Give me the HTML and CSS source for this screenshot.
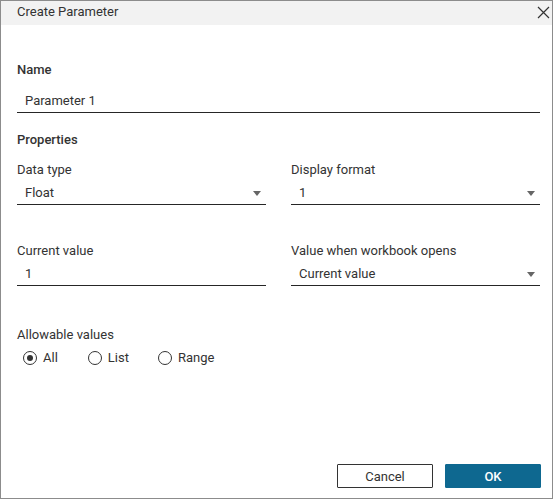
FILE: index.html
```html
<!DOCTYPE html>
<html>
<head>
<meta charset="utf-8">
<link rel="stylesheet" href="styles.css">
</head>
<body>
<div class="dialog">
  <div class="titlebar">
    <span class="title">Create Parameter</span>
    <svg class="close" width="13" height="13" viewBox="0 0 13 13"><path d="M1 1 L12 12 M12 1 L1 12" stroke="#333" stroke-width="1.2" fill="none"/></svg>
  </div>
  <div class="content">
    <div class="label strong name-label">Name</div>
    <div class="field name-field">Parameter 1</div>
    <div class="label strong props">Properties</div>
    <div class="grid">
      <div class="cell">
        <div class="label">Data type</div>
        <div class="field select"><span>Float</span><span class="arrow"></span></div>
      </div>
      <div class="cell">
        <div class="label">Display format</div>
        <div class="field select"><span>1</span><span class="arrow"></span></div>
      </div>
      <div class="cell row2">
        <div class="label">Current value</div>
        <div class="field"><span>1</span></div>
      </div>
      <div class="cell row2">
        <div class="label">Value when workbook opens</div>
        <div class="field select"><span>Current value</span><span class="arrow"></span></div>
      </div>
    </div>
    <div class="label allow">Allowable values</div>
    <div class="radios">
      <label class="radio"><span class="circle checked"></span>All</label>
      <label class="radio"><span class="circle"></span>List</label>
      <label class="radio"><span class="circle"></span>Range</label>
    </div>
    <div class="buttons">
      <button class="btn cancel">Cancel</button>
      <button class="btn ok">OK</button>
    </div>
  </div>
</div>
</body>
</html>
```
FILE: styles.css
```css
html, body {
  margin: 0;
  padding: 0;
  background: #fff;
}
body {
  font-family: Roboto, "Liberation Sans", sans-serif;
  font-size: 13px;
  color: #333;
}
.dialog {
  width: 553px;
  height: 499px;
  box-sizing: border-box;
  border: 1px solid #8c8c8c;
  display: flex;
  flex-direction: column;
}
.titlebar {
  height: 24px;
  background: #f2f2f2;
  display: flex;
  align-items: center;
  justify-content: space-between;
  padding: 0 2px 0 16px;
}
.title {
  line-height: 21px;
  margin-top: -4px;
  color: #333;
}
.close {
  margin-top: -2px;
}
.content {
  flex: 1;
  display: flex;
  flex-direction: column;
  padding: 0 12px 10px 16px;
}
.label {
  line-height: 16px;
  height: 16px;
}
.strong {
  font-weight: 500;
}
.name-label {
  margin-top: 37px;
}
.field {
  height: 24px;
  box-sizing: content-box;
  border-bottom: 1px solid #262626;
  display: flex;
  align-items: center;
  justify-content: space-between;
  padding: 0 5px 0 8px;
}
.name-field {
  margin-top: 10px;
}
.props {
  margin-top: 19px;
}
.grid {
  display: grid;
  grid-template-columns: 1fr 1fr;
  column-gap: 25px;
  margin-top: 14px;
}
.cell .label {
  margin-bottom: 2px;
}
.row2 {
  margin-top: 38px;
}
.arrow {
  width: 0;
  height: 0;
  border-left: 4px solid transparent;
  border-right: 4px solid transparent;
  border-top: 5px solid #666;
  margin-top: 2px;
}
.allow {
  margin-top: 41px;
}
.radios {
  display: flex;
  margin-top: 7px;
  padding-left: 6px;
  line-height: 16px;
}
.radio {
  display: flex;
  align-items: center;
  margin-right: 30px;
}
.radio:nth-child(2) {
  margin-right: 29px;
}
.circle {
  width: 14px;
  height: 14px;
  box-sizing: border-box;
  border: 1.3px solid #333;
  border-radius: 50%;
  margin-right: 6px;
  display: flex;
  align-items: center;
  justify-content: center;
}
.circle.checked::after {
  content: "";
  width: 6px;
  height: 6px;
  border-radius: 50%;
  background: #333;
}
.buttons {
  margin-top: auto;
  display: flex;
  justify-content: flex-end;
  gap: 12px;
  margin-right: -1px;
}
.btn {
  width: 96px;
  height: 24px;
  font-family: Roboto, "Liberation Sans", sans-serif;
  font-size: 13px;
  border-radius: 1px;
  cursor: pointer;
}
.cancel {
  background: #fff;
  border: 1px solid #333;
  color: #333;
}
.ok {
  background: #0e6890;
  border: 1px solid #0e6890;
  color: #fff;
  font-weight: 500;
}
```
